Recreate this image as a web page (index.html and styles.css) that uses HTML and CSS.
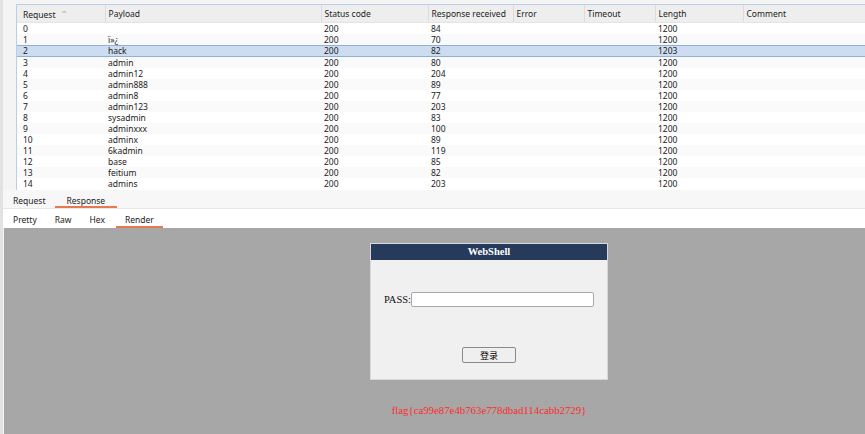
FILE: index.html
```html
<!DOCTYPE html>
<html lang="en">
<head>
    <meta charset="UTF-8">
    <title>Intruder results</title>
    <link rel="stylesheet" href="styles.css">
</head>
<body>
    <div class="app">
        <div class="results">
            <div class="results-box">
                <table class="results-table">
                    <colgroup>
                        <col style="width:88px">
                        <col style="width:216px">
                        <col style="width:107px">
                        <col style="width:85px">
                        <col style="width:71px">
                        <col style="width:71px">
                        <col style="width:88px">
                        <col>
                    </colgroup>
                    <thead>
                        <tr>
                            <th class="first">Request <span class="sort">&#8963;</span></th>
                            <th>Payload</th>
                            <th>Status code</th>
                            <th>Response received</th>
                            <th>Error</th>
                            <th>Timeout</th>
                            <th>Length</th>
                            <th>Comment</th>
                        </tr>
                    </thead>
                    <tbody id="rows"></tbody>
                </table>
            </div>
        </div>
        <div class="tabs">
            <span class="tab">Request</span>
            <span class="tab active">Response</span>
        </div>
        <div class="subtabs">
            <span class="subtab">Pretty</span>
            <span class="subtab">Raw</span>
            <span class="subtab">Hex</span>
            <span class="subtab active">Render</span>
        </div>
        <div class="render">
            <div class="page">
                <div class="shell">
                    <div class="shell-title">WebShell</div>
                    <div class="shell-body">
                        <div class="pass-row">
                            <label>PASS:</label><input type="text" class="pass-input">
                        </div>
                        <button class="login">登录</button>
                    </div>
                </div>
                <div class="flag">flag{ca99e87e4b763e778dbad114cabb2729}</div>
            </div>
        </div>
    </div>
    <script>
        const data = [
            ['0', '', '84', '1200'],
            ['1', 'ï»¿', '70', '1200'],
            ['2', 'hack', '82', '1203'],
            ['3', 'admin', '80', '1200'],
            ['4', 'admin12', '204', '1200'],
            ['5', 'admin888', '89', '1200'],
            ['6', 'admin8', '77', '1200'],
            ['7', 'admin123', '203', '1200'],
            ['8', 'sysadmin', '83', '1200'],
            ['9', 'adminxxx', '100', '1200'],
            ['10', 'adminx', '89', '1200'],
            ['11', '6kadmin', '119', '1200'],
            ['12', 'base', '85', '1200'],
            ['13', 'feitium', '82', '1200'],
            ['14', 'admins', '203', '1200']
        ];
        const tbody = document.getElementById('rows');
        data.forEach(function(row, i) {
            const tr = document.createElement('tr');
            if (i === 2) tr.className = 'selected';
            const cells = [row[0], row[1], '200', row[2], '', '', row[3], ''];
            cells.forEach(function(text, j) {
                const td = document.createElement('td');
                if (j === 0) td.className = 'first';
                td.textContent = text;
                tr.appendChild(td);
            });
            tbody.appendChild(tr);
        });
    </script>
</body>
</html>
```

FILE: styles.css
```css
body {
    margin: 0;
    font-family: "Noto Sans", "Liberation Sans", sans-serif;
    background-color: #f4f4f4;
    color: #222;
    overflow: hidden;
}
.app {
    height: 434px;
    width: 865px;
    display: flex;
    flex-direction: column;
    border-left: 3px solid #e2e2e2;
    box-sizing: border-box;
}
.results {
    padding: 4px 0 0 13px;
    height: 186px;
}
.results-box {
    height: 185px;
    overflow: hidden;
    border: 1px solid #b9cfe6;
    border-right: none;
    background-color: #fff;
}
.results-table {
    border-collapse: collapse;
    table-layout: fixed;
    width: 100%;
    font-size: 8.5px;
}
.results-table th {
    height: 17px;
    background-color: #eeeeee;
    font-weight: normal;
    text-align: left;
    padding: 0 3px;
    border-left: 1px solid #dcdcdc;
    border-bottom: 1px solid #e4e4e4;
    white-space: nowrap;
}
.results-table th.first {
    border-left: none;
    padding-left: 6px;
}
.sort {
    color: #b4b4b4;
    font-size: 10px;
    margin-left: 2px;
}
.results-table td {
    height: 11px;
    padding: 0 3px;
    line-height: 10px;
    white-space: nowrap;
    overflow: hidden;
}
.results-table td.first {
    padding-left: 6px;
}
.results-table tbody tr:nth-child(even) td {
    background-color: #fafafa;
}
.results-table tbody tr.selected td {
    background-color: #cddcf0;
    border-top: 1px solid #8fb1d9;
    border-bottom: 1px solid #8fb1d9;
    height: 9px;
}
.tabs {
    height: 19px;
    display: flex;
    padding-left: 10px;
    font-size: 8.5px;
    background-color: #f7f7f7;
    border-bottom: 1px solid #e6e6e6;
    box-sizing: border-box;
}
.tab {
    padding-top: 4px;
    line-height: 13px;
}
.tab.active {
    margin-left: 9px;
    padding: 4px 12px 0;
    border-bottom: 2px solid #e8784f;
}
.subtabs {
    height: 19px;
    display: flex;
    padding-left: 10px;
    font-size: 8.5px;
    background-color: #fff;
    box-sizing: border-box;
}
.subtab {
    padding-top: 4px;
    line-height: 13px;
    margin-right: 18px;
}
.subtab.active {
    padding: 4px 9px 0;
    margin-left: -7px;
    border-bottom: 2px solid #e8784f;
}
.render {
    flex: 1;
    margin-left: 1px;
    background-color: #a7a7a7;
    font-family: "Liberation Serif", "Noto Sans CJK SC", serif;
}
.page {
    width: 238px;
    margin: 15px 0 0 366px;
}
.shell {
    background-color: #f0f0f0;
    border: 1px solid #d8d8d8;
}
.shell-title {
    height: 16px;
    line-height: 16px;
    background-color: #263a5b;
    color: #fff;
    font-weight: bold;
    font-size: 10.5px;
    text-align: center;
}
.shell-body {
    height: 119px;
    display: flex;
    flex-direction: column;
    align-items: center;
}
.pass-row {
    margin-top: 32px;
    display: flex;
    align-items: center;
    font-size: 10.5px;
    color: #111;
}
.pass-input {
    width: 183px;
    height: 15px;
    box-sizing: border-box;
    border: 1px solid #a9a9a9;
    border-radius: 2px;
    background-color: #fff;
    margin: 0;
    padding: 0;
}
.login {
    margin-top: 40px;
    width: 54px;
    height: 16px;
    padding: 0;
    font-family: "Noto Sans CJK SC", sans-serif;
    font-size: 9px;
    background-color: #efefef;
    border: 1px solid #8a8a8a;
    border-radius: 2px;
}
.flag {
    margin-top: 24px;
    text-align: center;
    color: #ff2a2a;
    font-size: 10.8px;
}
```
